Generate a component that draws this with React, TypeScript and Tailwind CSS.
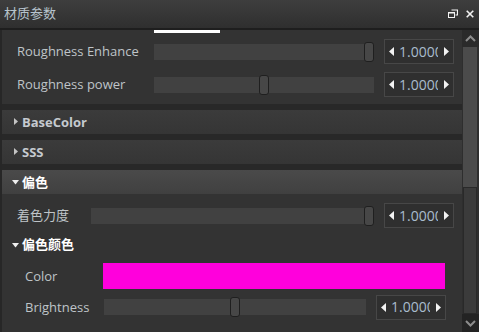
import React from "react";

const font = "font-['Open_Sans','Noto_Sans_CJK_SC',sans-serif]";

function NumberBox({ className = "" }: { className?: string }) {
  return (
    <div className={`flex h-[25px] w-[70px] shrink-0 items-center border border-[#474747] bg-[#2f2f2f] pl-[4px] pr-[4px] ${className}`}>
      <svg width="5" height="9" viewBox="0 0 5 9" className="shrink-0">
        <path d="M5 0 L0 4.5 L5 9 Z" fill="#f2f2f2" />
      </svg>
      <span className="ml-[5px] w-[39px] overflow-hidden whitespace-nowrap text-[14px] leading-none text-[#a9bccd]">1.0000</span>
      <svg width="5" height="9" viewBox="0 0 5 9" className="ml-auto shrink-0">
        <path d="M0 0 L5 4.5 L0 9 Z" fill="#f2f2f2" />
      </svg>
    </div>
  );
}

function Slider({ handle }: { handle: string }) {
  return (
    <div className="relative h-[16px] flex-1 bg-[#414141]">
      <div className={`absolute top-[-2px] h-[20px] w-[10px] rounded-[3px] border border-[#1f1f1f] bg-[#474747] ${handle}`} />
    </div>
  );
}

function SliderRow({
  label,
  labelW,
  handle,
  padL = "pl-[15px]",
  padR = "pr-[8px]",
  h = "h-[33px]",
}: {
  label: string;
  labelW: string;
  handle: string;
  padL?: string;
  padR?: string;
  h?: string;
}) {
  return (
    <div className={`flex ${h} items-center ${padL} ${padR}`}>
      <span className={`${labelW} shrink-0 pt-[1px] text-[13px] text-[#bfc4c8]`}>{label}</span>
      <Slider handle={handle} />
      <NumberBox className="ml-[10px]" />
    </div>
  );
}

function Header({ title, open = false }: { title: string; open?: boolean }) {
  return (
    <>
      <div className="h-[6px] bg-[#282828]" />
      <div
        className={`flex h-[24px] items-center ${
          open ? "bg-gradient-to-b from-[#4a4a4a] to-[#404040] pl-[10px]" : "bg-gradient-to-b from-[#3b3b3b] to-[#353535] pl-[12px]"
        }`}
      >
        {open ? (
          <svg width="7" height="5" viewBox="0 0 7 5" className="mr-[3px]">
            <path d="M0 0 L7 0 L3.5 4.5 Z" fill="#f0f0f0" />
          </svg>
        ) : (
          <svg width="4" height="7" viewBox="0 0 4 7" className="mr-[4px] -mt-[2px]">
            <path d="M0 0 L4 3.5 L0 7 Z" fill="#c4c4c4" />
          </svg>
        )}
        <span className={`pt-[2px] text-[13px] font-bold ${open ? "text-white" : "text-[#c5cacf]"}`}>{title}</span>
      </div>
    </>
  );
}

function Scrollbar() {
  return (
    <div className="flex w-[17px] shrink-0 flex-col bg-[#2e2e2e]">
      <div className="flex h-[17px] items-center justify-center bg-[#2a2a2a]">
        <svg width="11" height="7" viewBox="0 0 11 7">
          <path d="M1 6 L5.5 1.5 L10 6" stroke="#8c8c8c" strokeWidth="2" fill="none" />
        </svg>
      </div>
      <div className="ml-[1px] mr-[2px] h-[140px] bg-[#4b4b4b]" />
      <div className="ml-[1px] mr-[2px] flex-1 border border-[#292929] bg-[#3b3b3b]" />
      <div className="flex h-[18px] items-center justify-center bg-[#232323]">
        <svg width="11" height="7" viewBox="0 0 11 7">
          <path d="M1 1 L5.5 5.5 L10 1" stroke="#8c8c8c" strokeWidth="2" fill="none" />
        </svg>
      </div>
    </div>
  );
}

export default function App() {
  return (
    <div className={`flex h-[332px] w-[479px] flex-col overflow-hidden bg-[#333333] ${font}`}>
      <div className="flex h-[30px] shrink-0 items-center border-b-2 border-[#1e1e1e] bg-gradient-to-b from-[#3e3e3e] to-[#2f2f2f] pl-[4px] pr-[5px]">
        <span className="text-[13px] text-[#b7c4cd]">材质参数</span>
        <svg width="10" height="9" viewBox="0 0 10 9" className="ml-auto mt-[-2px]">
          <path d="M3.5 1 H9.5 V6 H7.5" stroke="#f2f2f2" strokeWidth="1.2" fill="none" />
          <rect x="0.5" y="3.5" width="6" height="5" stroke="#f2f2f2" strokeWidth="1" fill="none" />
          <rect x="0.5" y="3" width="6.5" height="1.5" fill="#f2f2f2" />
        </svg>
        <svg width="8" height="8" viewBox="0 0 8 8" className="ml-[8px] mt-[-1px]">
          <path d="M0.7 0.7 L7.3 7.3 M7.3 0.7 L0.7 7.3" stroke="#f2f2f2" strokeWidth="1.6" />
        </svg>
      </div>
      <div className="flex min-h-0 flex-1">
        <div className="flex min-w-0 flex-1 flex-col border-l-2 border-[#272727]">
          <div className="ml-[152px] h-[3px] w-[66px] shrink-0 bg-white" />
          <div className="pt-[2px] pb-[3px]">
            <SliderRow label="Roughness Enhance" labelW="w-[137px]" handle="right-0" />
            <SliderRow label="Roughness power" labelW="w-[137px]" handle="left-[105px]" />
          </div>
          <Header title="BaseColor" />
          <Header title="SSS" />
          <Header title="偏色" open />
          <div className="pt-[5px]">
            <SliderRow label="着色力度" labelW="w-[74px]" handle="right-0" />
            <div className="flex h-[26px] items-center pl-[10px]">
              <svg width="7" height="5" viewBox="0 0 7 5" className="mr-[3px]">
                <path d="M0 0 L7 0 L3.5 4.5 Z" fill="#f0f0f0" />
              </svg>
              <span className="text-[13px] font-bold text-white">偏色颜色</span>
            </div>
            <div className="flex h-[36px] items-center pl-[23px] pr-[17px]">
              <span className="w-[78px] shrink-0 pt-[1px] text-[13px] text-[#bfc4c8]">Color</span>
              <div className="h-[26px] flex-1 bg-[#ff00dc]" />
            </div>
            <SliderRow label="Brightness" labelW="w-[79px]" handle="left-[126px]" padL="pl-[23px]" padR="pr-[16px]" h="h-[26px]" />
          </div>
        </div>
        <Scrollbar />
      </div>
    </div>
  );
}
